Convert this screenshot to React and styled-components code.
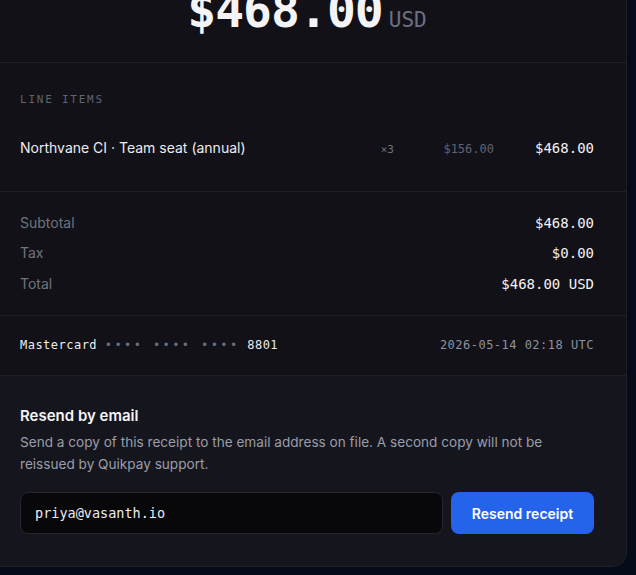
import React from 'react';
import styled, { createGlobalStyle } from 'styled-components';

const mono = '"DejaVu Sans Mono", "Liberation Mono", monospace';
const sans = 'Inter, "Noto Sans", "Liberation Sans", sans-serif';

const GlobalStyle = createGlobalStyle`
  html, body {
    margin: 0;
    padding: 0;
    background: #060b19;
    overflow: hidden;
  }
  body {
    font-family: ${sans};
    color: #ececf0;
    -webkit-font-smoothing: antialiased;
  }
  * { box-sizing: border-box; }
`;

const Page = styled.div`
  min-height: 575px;
  background: radial-gradient(ellipse at 50% 100%, #0a1226 0%, #060b19 60%);
`;

const Card = styled.div`
  width: 640px;
  margin: -43px 0 0 -13px;
  background: #111117;
  border: 1px solid #1e1f27;
  border-radius: 14px;
  overflow: hidden;
`;

const Section = styled.section`
  padding: ${p => p.$pad || '20px 32px'};
  border-top: ${p => (p.$first ? 'none' : '1px solid #1e1f27')};
  background: ${p => (p.$alt ? '#15161d' : 'transparent')};
`;

const AmountRow = styled.div`
  display: flex;
  justify-content: center;
  align-items: baseline;
  gap: 6px;
`;

const BigAmount = styled.span`
  font-family: ${mono};
  font-weight: 600;
  font-size: 48px;
  letter-spacing: -0.02em;
  line-height: 1;
  color: #f4f4f7;
`;

const Currency = styled.span`
  font-family: ${mono};
  font-size: 21px;
  color: #6b7083;
`;

const Eyebrow = styled.div`
  font-family: ${mono};
  font-size: 11px;
  line-height: 16px;
  letter-spacing: 0.16em;
  text-transform: uppercase;
  color: #5f6373;
`;

const ItemRow = styled.div`
  display: grid;
  grid-template-columns: 1fr auto 80px 80px;
  column-gap: 20px;
  align-items: baseline;
  margin-top: 30px;
  line-height: 20px;
`;

const ItemName = styled.span`
  font-size: 14px;
  color: #ececf0;
`;

const MonoCell = styled.span`
  font-family: ${mono};
  font-size: ${p => p.$size || 14}px;
  color: ${p => p.$color || '#f2f2f5'};
  text-align: right;
`;

const Totals = styled.div`
  display: flex;
  flex-direction: column;
  gap: 10px;
`;

const TotalRow = styled.div`
  display: flex;
  justify-content: space-between;
  align-items: baseline;
  line-height: 20px;
  margin-top: ${p => (p.$strong ? '1px' : '0')};
`;

const TotalLabel = styled.span`
  font-size: 14px;
  color: #70747f;
`;

const PayRow = styled.div`
  display: flex;
  justify-content: space-between;
  align-items: baseline;
  font-family: ${mono};
  font-size: 12px;
  line-height: 19px;
  letter-spacing: 0.04em;
`;

const Card4 = styled.span`
  color: #ececf0;
  white-space: pre;
`;

const Dots = styled.span`
  color: #6a6e7d;
  letter-spacing: 0.2em;
`;

const Stamp = styled.span`
  color: #8e92a0;
`;

const Title = styled.h3`
  margin: 0;
  font-size: 15px;
  font-weight: 600;
  line-height: 20px;
  color: #f4f4f6;
`;

const Desc = styled.p`
  margin: 5px 0 0;
  font-size: 13.6px;
  line-height: 22px;
  color: #9a9daa;
`;

const Form = styled.form`
  display: flex;
  gap: 8px;
  margin-top: 17px;
`;

const EmailInput = styled.input`
  flex: 1;
  height: 42px;
  padding: 0 14px;
  background: #08080b;
  border: 1px solid #25262e;
  border-radius: 8px;
  font-family: ${mono};
  font-size: 13.5px;
  color: #ececf0;
  outline: none;
`;

const Button = styled.button`
  width: 143px;
  height: 42px;
  border: none;
  border-radius: 8px;
  background: #2563eb;
  color: #ffffff;
  font-family: ${sans};
  font-size: 14px;
  font-weight: 600;
  cursor: pointer;
`;

export default function App() {
  return (
    <Page>
      <GlobalStyle />
      <Card>
        <Section $first $pad="28px 32px 28px">
          <AmountRow>
            <BigAmount>$468.00</BigAmount>
            <Currency>USD</Currency>
          </AmountRow>
        </Section>

        <Section $pad="29px 32px 31px">
          <Eyebrow>Line items</Eyebrow>
          <ItemRow>
            <ItemName>Northvane CI · Team seat (annual)</ItemName>
            <MonoCell $size={11} $color="#6f7382">×3</MonoCell>
            <MonoCell $size={12} $color="#5f6373">$156.00</MonoCell>
            <MonoCell>$468.00</MonoCell>
          </ItemRow>
        </Section>

        <Section $pad="21px 32px 21px">
          <Totals>
            <TotalRow>
              <TotalLabel>Subtotal</TotalLabel>
              <MonoCell>$468.00</MonoCell>
            </TotalRow>
            <TotalRow>
              <TotalLabel>Tax</TotalLabel>
              <MonoCell>$0.00</MonoCell>
            </TotalRow>
            <TotalRow $strong>
              <TotalLabel>Total</TotalLabel>
              <MonoCell>$468.00 USD</MonoCell>
            </TotalRow>
          </Totals>
        </Section>

        <Section $pad="20px 32px 20px">
          <PayRow>
            <Card4>
              Mastercard <Dots>•••• •••• ••••</Dots> 8801
            </Card4>
            <Stamp>2026-05-14 02:18 UTC</Stamp>
          </PayRow>
        </Section>

        <Section $alt $pad="30px 32px 32px">
          <Title>Resend by email</Title>
          <Desc>
            Send a copy of this receipt to the email address on file. A second copy will not be
            reissued by Quikpay support.
          </Desc>
          <Form onSubmit={e => e.preventDefault()}>
            <EmailInput type="email" defaultValue="priya@vasanth.io" />
            <Button type="submit">Resend receipt</Button>
          </Form>
        </Section>
      </Card>
    </Page>
  );
}
